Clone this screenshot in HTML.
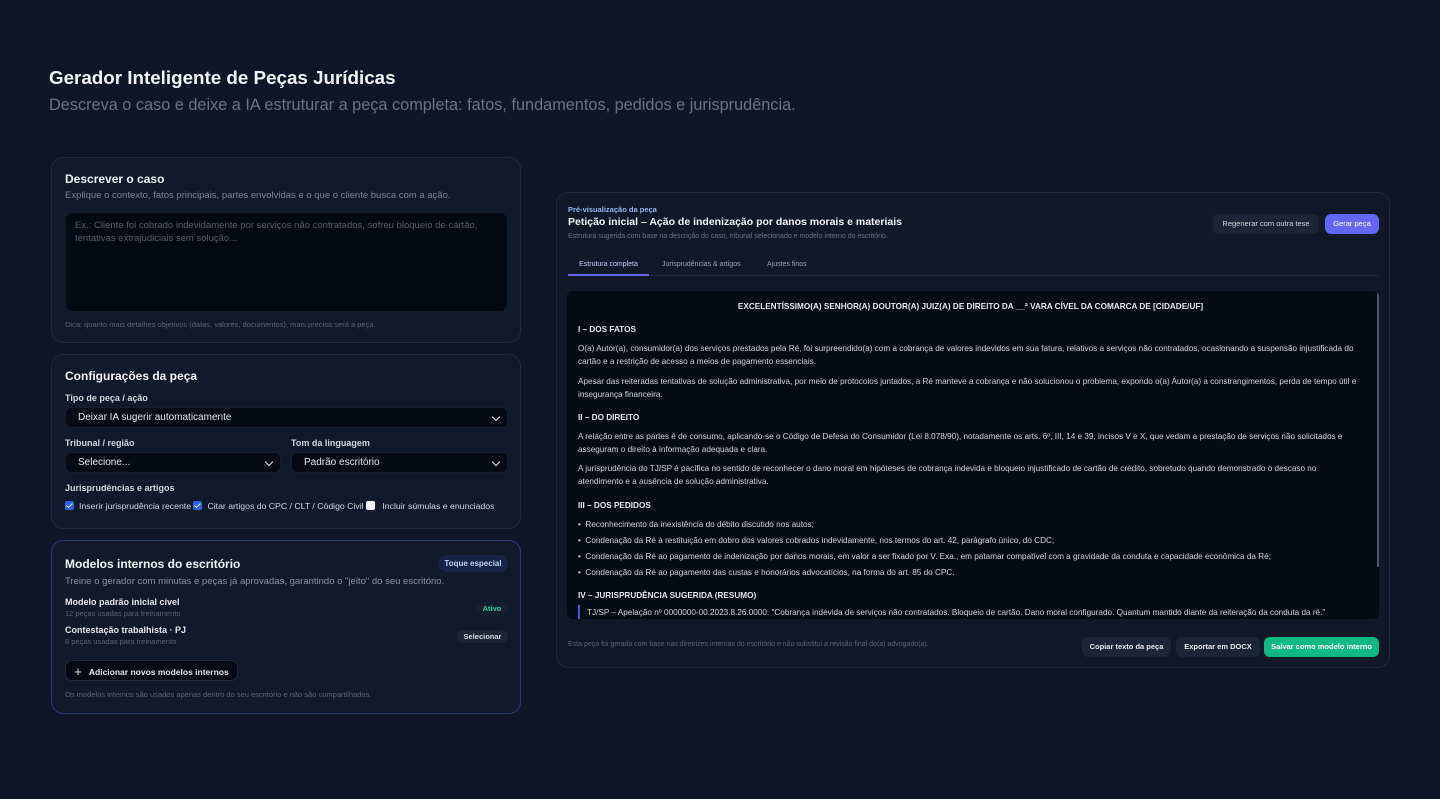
<!DOCTYPE html>
<html><head><meta charset="utf-8">
<style>
*{box-sizing:border-box;margin:0;padding:0}
html,body{width:1440px;height:799px;overflow:hidden;background:#0f1627;font-family:"Liberation Sans",sans-serif;color:#e5e7eb}
.abs{position:absolute}
h1{position:absolute;left:49px;top:67px;font-size:18.8px;font-weight:bold;color:#f3f4f6}
.sub{position:absolute;left:49px;top:96px;font-size:16.3px;color:#6b7280}
.card{position:absolute;background:#111a2b;border:1px solid #1f2a3d;border-radius:12px}
.ct{font-size:12px;font-weight:bold;color:#f3f4f6}
.cs{font-size:9.5px;color:#7b8494}
.lbl{font-size:9px;font-weight:bold;color:#d1d5db}
.sel{position:absolute;height:21px;background:#050a14;border-radius:6px;border:1px solid #161f30;font-size:10px;color:#e5e7eb;padding:4px 12px}
.sel:after{content:"";position:absolute;right:8px;top:6px;width:5px;height:5px;border-right:1.5px solid #e5e7eb;border-bottom:1.5px solid #e5e7eb;transform:rotate(45deg)}
.cb{display:inline-block;width:9px;height:9px;border-radius:2px;background:#2563eb;vertical-align:-1px;margin-right:5px;position:relative}
.cb.on:after{content:"";position:absolute;left:3px;top:1px;width:2px;height:5px;border-right:1.3px solid #fff;border-bottom:1.3px solid #fff;transform:rotate(45deg)}
.cb.off{background:#f3f4f6}
.btn{position:absolute;border-radius:6px;font-size:8.5px;font-weight:bold;text-align:center;line-height:20px;height:20px}
.doc{position:absolute;left:567px;top:291px;width:812px;height:328px;background:#050a14;border-radius:6px;overflow:hidden;font-size:8.2px;color:#d1d5db;padding:0 11px}
.doc p{line-height:13px;position:absolute;left:11px;width:785px}
.doc b{font-weight:bold;color:#e5e7eb}
</style></head><body>
<h1>Gerador Inteligente de Peças Jurídicas</h1>
<div class="sub">Descreva o caso e deixe a IA estruturar a peça completa: fatos, fundamentos, pedidos e jurisprudência.</div>

<div class="card" style="left:51px;top:157px;width:470px;height:186px">
 <div class="abs ct" style="left:13px;top:14px">Descrever o caso</div>
 <div class="abs cs" style="left:13px;top:32px">Explique o contexto, fatos principais, partes envolvidas e o que o cliente busca com a ação.</div>
 <div class="abs" style="left:13px;top:54px;width:443px;height:100px;background:#040913;border-radius:8px;border:1px solid #151d2d;padding:6px 9px;font-size:9.5px;line-height:13px;color:#555e6c">Ex.: Cliente foi cobrado indevidamente por serviços não contratados, sofreu bloqueio de cartão, tentativas extrajudiciais sem solução...</div>
 <div class="abs" style="left:13px;top:162px;font-size:7.5px;color:#5b6472">Dica: quanto mais detalhes objetivos (datas, valores, documentos), mais precisa será a peça.</div>
</div>

<div class="card" style="left:51px;top:354px;width:470px;height:175px">
 <div class="abs ct" style="left:13px;top:14px">Configurações da peça</div>
 <div class="abs lbl" style="left:13px;top:38px">Tipo de peça / ação</div>
 <div class="sel" style="left:13px;top:52px;width:443px">Deixar IA sugerir automaticamente</div>
 <div class="abs lbl" style="left:13px;top:83px">Tribunal / região</div>
 <div class="abs lbl" style="left:239px;top:83px">Tom da linguagem</div>
 <div class="sel" style="left:13px;top:97px;width:216px">Selecione...</div>
 <div class="sel" style="left:239px;top:97px;width:217px">Padrão escritório</div>
 <div class="abs lbl" style="left:13px;top:128px">Jurisprudências e artigos</div>
 <div class="abs" style="left:13px;top:146px;font-size:8.7px;color:#d1d5db;white-space:nowrap"><span class="cb on"></span>Inserir jurisprudência recente <span class="cb on"></span>Citar artigos do CPC / CLT / Código Civil <span class="cb off"></span> Incluir súmulas e enunciados</div>
</div>

<div class="card" style="left:51px;top:540px;width:470px;height:174px;border-color:#283a78">
 <div class="abs ct" style="left:13px;top:16px">Modelos internos do escritório</div>
 <div class="btn" style="left:386px;top:14px;width:70px;height:17px;line-height:17px;border-radius:9px;background:#172445;color:#bfd0f5;font-size:8px">Toque especial</div>
 <div class="abs" style="left:13px;top:35px;font-size:9.5px;color:#8a93a3">Treine o gerador com minutas e peças já aprovadas, garantindo o "jeito" do seu escritório.</div>
 <div class="abs" style="left:13px;top:56px;font-size:9px;font-weight:bold;color:#e5e7eb">Modelo padrão inicial cível</div>
 <div class="abs" style="left:13px;top:68px;font-size:7.5px;color:#5b6472">12 peças usadas para treinamento</div>
 <div class="btn" style="left:424px;top:61px;width:32px;height:13px;line-height:13px;border-radius:7px;background:#15202f;color:#34d399;font-size:7.5px">Ativo</div>
 <div class="abs" style="left:13px;top:84px;font-size:9px;font-weight:bold;color:#e5e7eb">Contestação trabalhista · PJ</div>
 <div class="abs" style="left:13px;top:96px;font-size:7.5px;color:#5b6472">8 peças usadas para treinamento</div>
 <div class="btn" style="left:405px;top:89px;width:51px;height:13px;line-height:13px;border-radius:7px;background:#1c2535;color:#d1d5db;font-size:7.5px">Selecionar</div>
 <div class="btn" style="left:13px;top:119px;width:173px;height:21px;line-height:21px;background:#040913;border:1px solid #1f2a3d;color:#e5e7eb;font-size:8.5px;border-radius:7px"><span style="font-size:13px;font-weight:normal;vertical-align:-1px;margin-right:7px">+</span>Adicionar novos modelos internos</div>
 <div class="abs" style="left:13px;top:149px;font-size:7.5px;color:#5b6472">Os modelos internos são usados apenas dentro do seu escritório e não são compartilhados.</div>
</div>

<div class="card" style="left:556px;top:192px;width:834px;height:476px;background:#111828">
 <div class="abs" style="left:11px;top:12px;font-size:7.5px;font-weight:bold;color:#93b4f8">Pré-visualização da peça</div>
 <div class="abs" style="left:11px;top:23px;font-size:10.5px;font-weight:bold;color:#f3f4f6">Petição inicial – Ação de indenização por danos morais e materiais</div>
 <div class="abs" style="left:11px;top:40px;font-size:7px;color:#6b7280">Estrutura sugerida com base na descrição do caso, tribunal selecionado e modelo interno do escritório.</div>
 <div class="btn" style="left:656px;top:21px;width:106px;background:#1c2535;color:#d1d5db;font-weight:normal;font-size:7.5px">Regenerar com outra tese</div>
 <div class="btn" style="left:768px;top:21px;width:54px;background:#6366f1;color:#fff;font-weight:normal;font-size:7.5px">Gerar peça</div>
 <div class="abs" style="left:11px;top:82px;width:811px;height:1px;background:#1f2a3d"></div>
 <div class="abs" style="left:11px;top:68px;width:81px;text-align:center;font-size:7px;color:#c7d2fe">Estrutura completa</div>
 <div class="abs" style="left:11px;top:81px;width:81px;height:1.5px;background:#6366f1"></div>
 <div class="abs" style="left:105px;top:68px;font-size:7px;color:#9ca3af">Jurisprudências &amp; artigos</div>
 <div class="abs" style="left:210px;top:68px;font-size:7px;color:#9ca3af">Ajustes finos</div>
 <div class="abs" style="left:11px;top:448px;font-size:7px;color:#5b6472">Esta peça foi gerada com base nas diretrizes internas do escritório e não substitui a revisão final do(a) advogado(a).</div>
 <div class="btn" style="left:525px;top:444px;width:89px;background:#1c2535;color:#e5e7eb;font-size:7.5px">Copiar texto da peça</div>
 <div class="btn" style="left:619px;top:444px;width:84px;background:#1c2535;color:#e5e7eb;font-size:7.5px">Exportar em DOCX</div>
 <div class="btn" style="left:707px;top:444px;width:115px;background:#10b981;color:#fff;font-size:7.5px">Salvar como modelo interno</div>
</div>

<div class="doc">
 <div class="abs" style="right:0;top:0;width:2px;height:276px;background:#4b5563"></div>
 <p style="top:9px;text-align:center"><b>EXCELENTÍSSIMO(A) SENHOR(A) DOUTOR(A) JUIZ(A) DE DIREITO DA __ª VARA CÍVEL DA COMARCA DE [CIDADE/UF]</b></p>
 <p style="top:32px"><b>I – DOS FATOS</b></p>
 <p style="top:51px">O(a) Autor(a), consumidor(a) dos serviços prestados pela Ré, foi surpreendido(a) com a cobrança de valores indevidos em sua fatura, relativos a serviços não contratados, ocasionando a suspensão injustificada do cartão e a restrição de acesso a meios de pagamento essenciais.</p>
 <p style="top:84px">Apesar das reiteradas tentativas de solução administrativa, por meio de protocolos juntados, a Ré manteve a cobrança e não solucionou o problema, expondo o(a) Autor(a) a constrangimentos, perda de tempo útil e insegurança financeira.</p>
 <p style="top:120px"><b>II – DO DIREITO</b></p>
 <p style="top:139px">A relação entre as partes é de consumo, aplicando-se o Código de Defesa do Consumidor (Lei 8.078/90), notadamente os arts. 6º, III, 14 e 39, incisos V e X, que vedam a prestação de serviços não solicitados e asseguram o direito à informação adequada e clara.</p>
 <p style="top:171px">A jurisprudência do TJ/SP é pacífica no sentido de reconhecer o dano moral em hipóteses de cobrança indevida e bloqueio injustificado de cartão de crédito, sobretudo quando demonstrado o descaso no atendimento e a ausência de solução administrativa.</p>
 <p style="top:208px"><b>III – DOS PEDIDOS</b></p>
 <p style="top:227px">• &nbsp;Reconhecimento da inexistência do débito discutido nos autos;</p>
 <p style="top:243px">• &nbsp;Condenação da Ré à restituição em dobro dos valores cobrados indevidamente, nos termos do art. 42, parágrafo único, do CDC;</p>
 <p style="top:259px">• &nbsp;Condenação da Ré ao pagamento de indenização por danos morais, em valor a ser fixado por V. Exa., em patamar compatível com a gravidade da conduta e capacidade econômica da Ré;</p>
 <p style="top:275px">• &nbsp;Condenação da Ré ao pagamento das custas e honorários advocatícios, na forma do art. 85 do CPC.</p>
 <p style="top:298px"><b>IV – JURISPRUDÊNCIA SUGERIDA (RESUMO)</b></p>
 <div class="abs" style="left:11px;top:314px;width:1.5px;height:14px;background:#3b5bdb"></div>
 <p style="top:315px;left:20px">TJ/SP – Apelação nº 0000000-00.2023.8.26.0000: "Cobrança indevida de serviços não contratados. Bloqueio de cartão. Dano moral configurado. Quantum mantido diante da reiteração da conduta da ré."</p>
</div>
</body></html>
